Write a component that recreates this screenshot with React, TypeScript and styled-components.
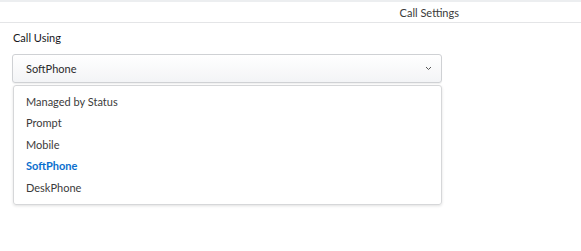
import React from "react";
import styled, { createGlobalStyle } from "styled-components";

const Global = createGlobalStyle`
  html, body { margin: 0; padding: 0; background: #fff; }
  body { font-family: Lato, "Open Sans", "Liberation Sans", sans-serif; }
`;

const Page = styled.div`
  width: 581px;
  height: 251px;
  background: #fff;
  border-top: 2px solid #eceef0;
  box-sizing: border-box;
`;

const Header = styled.div`
  height: 20px;
  display: flex;
  align-items: center;
  justify-content: flex-end;
  padding-right: 122px;
  border-bottom: 1px solid #e4e5e7;
  font-size: 11px;
  color: #3a3a3a;
`;

const Body = styled.div`
  padding: 7px 139px 0 12px;
  display: flex;
  flex-direction: column;
`;

const Label = styled.div`
  font-size: 11px;
  color: #16161a;
  padding-left: 1px;
  height: 16px;
  line-height: 16px;
  margin-bottom: 8px;
`;

const Select = styled.div`
  height: 27px;
  border: 1px solid #cfd1d4;
  border-radius: 3px;
  background: linear-gradient(#ffffff, #f3f4f6);
  display: flex;
  align-items: center;
  justify-content: space-between;
  padding: 0 9px 0 13px;
  font-size: 11px;
  color: #2b2b2b;
  box-shadow: 0 1px 1px rgba(0, 0, 0, 0.06);
`;

const Menu = styled.div`
  margin-top: 2px;
  margin-left: 1px;
  border: 1px solid #d6d7d9;
  border-radius: 3px;
  box-shadow: 0 1px 3px rgba(0, 0, 0, 0.12);
  padding: 5px 0 6px;
  display: flex;
  flex-direction: column;
`;

const Item = styled.div<{ $active?: boolean }>`
  height: 21.4px;
  line-height: 21px;
  padding-left: 12px;
  font-size: 11px;
  color: ${(p) => (p.$active ? "#0b6fce" : "#3b3b3b")};
  font-weight: ${(p) => (p.$active ? 700 : 400)};
`;

const items = ["Managed by Status", "Prompt", "Mobile", "SoftPhone", "DeskPhone"];

export default function App() {
  return (
    <Page>
      <Global />
      <Header>Call Settings</Header>
      <Body>
        <Label>Call Using</Label>
        <Select>
          <span>SoftPhone</span>
          <svg width="7" height="5" viewBox="0 0 7 5">
            <path d="M1 1 L3.5 3.5 L6 1" fill="none" stroke="#555" strokeWidth="1" />
          </svg>
        </Select>
        <Menu>
          {items.map((t) => (
            <Item key={t} $active={t === "SoftPhone"}>
              {t}
            </Item>
          ))}
        </Menu>
      </Body>
    </Page>
  );
}
